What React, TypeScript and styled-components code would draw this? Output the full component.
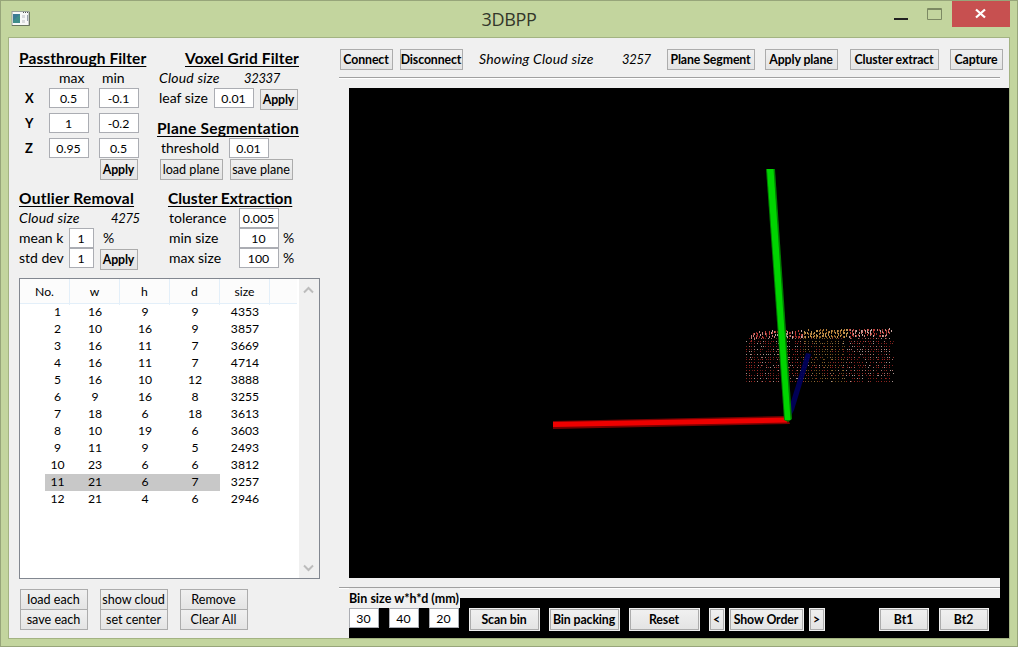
import React from "react";
import styled, { createGlobalStyle } from "styled-components";

const Global = createGlobalStyle`
  * { box-sizing: border-box; }
  html, body { margin: 0; padding: 0; }
  body { font-family: Lato, "Liberation Sans", sans-serif; color: #000; font-size: 14px; overflow: hidden; }
`;

const Frame = styled.div`
  width: 1018px; height: 647px; background: #c3d59e;
  border: 1px solid #97a57a; display: flex; flex-direction: column;
`;
const TitleBar = styled.header`
  height: 36px; display: grid; grid-template-columns: 170px 1fr 170px; flex: none;
`;
const TitleIcon = styled.div`padding: 10px 0 0 10px; line-height: 0;`;
const TitleText = styled.h1`
  margin: 0; text-align: center; font: 400 18px/37px "Open Sans", sans-serif;
  color: #33372a; letter-spacing: -0.3px;
`;
const WindowControls = styled.div`display: flex; justify-content: flex-end; padding-right: 7px;`;
const Client = styled.main`
  width: 1002px; height: 602px; margin-left: 7px; border: 1px solid #a3b382;
  background: #f0f0f0; display: flex; flex: none;
`;
const Side = styled.aside`width: 330px; padding: 10px 0 0 10px; flex: none;`;
const Filters = styled.div`display: flex; height: 230px;`;
const FilterColumn = styled.div<{ $w: number }>`width: ${p => p.$w}px; flex: none;`;
const Section = styled.section<{ $h: number }>`height: ${p => p.$h}px;`;
const Heading = styled.h2<{ $pl?: number; $ls?: number }>`
  margin: 0; padding-left: ${p => p.$pl ?? 0}px; height: 20px; white-space: nowrap;
  font-size: 15.5px; font-weight: 700; line-height: 21px; letter-spacing: ${p => p.$ls ?? 0.1}px;
  text-decoration: underline; text-underline-offset: 2px; text-decoration-thickness: 1px;
  text-decoration-skip-ink: none;
`;
const Row = styled.div<{ $h?: number; $pl?: number }>`
  display: flex; height: ${p => p.$h ?? 20}px; padding-left: ${p => p.$pl ?? 0}px; align-items: flex-start;
`;
const Label = styled.span<{ $w?: number; $bold?: boolean; $italic?: boolean }>`
  width: ${p => (p.$w ? p.$w + "px" : "auto")}; flex: none; white-space: nowrap; line-height: 20px;
  letter-spacing: ${p => (p.$italic ? 0.2 : 0)}px; font-size: ${p => (p.$bold ? 13 : 14)}px;
  font-weight: ${p => (p.$bold ? 700 : 400)}; font-style: ${p => (p.$italic ? "italic" : "normal")};
`;
const Count = styled.span<{ $w?: number }>`
  width: ${p => (p.$w ? p.$w + "px" : "auto")}; flex: none; line-height: 20px;
  font-size: 13px; font-style: italic; letter-spacing: -0.35px;
`;
const Field = styled.input<{ $w?: number; $mr?: number }>`
  width: ${p => p.$w ?? 40}px; height: 20px; margin: 0 ${p => p.$mr ?? 0}px 0 0; padding: 1px 1px 0 0; flex: none;
  border: 1px solid #abadb3; background: #fff; border-radius: 0; text-align: center; color: #000;
  font: 400 12.3px Lato, sans-serif;
`;
const Button = styled.button<{ $w: number; $mt?: number; $mr?: number; $bold?: boolean; $ring?: boolean }>`
  width: ${p => p.$w}px; height: 21px; margin: ${p => p.$mt ?? 0}px ${p => p.$mr ?? 0}px 0 0; padding: 0 1px 1px 0; flex: none;
  border: 1px solid #acacac; border-radius: 0; background: linear-gradient(#f0f0f0, #e4e4e4); color: #000;
  font: ${p => (p.$bold ? "700 12.3px" : "400 12.6px")} Lato, sans-serif; letter-spacing: ${p => (p.$bold ? -0.1 : 0)}px;
  white-space: nowrap; display: flex; align-items: center; justify-content: center;
  box-shadow: ${p => (p.$ring ? "0 0 0 1px #f0f0f0" : "none")};
`;

const ListBox = styled.div`
  width: 301px; height: 301px; border: 1px solid #828790; background: #fff; display: flex;
`;
const Table = styled.div`width: 279px; font-size: 12.2px; flex: none;`;
const HeaderRow = styled.div`
  display: grid; grid-template-columns: 50px 50px 50px 50px 50px 1fr; width: 277px; height: 25px;
  background: #fcfcfc; border-bottom: 1px solid #e3eff9; line-height: 26px; text-align: center;
`;
const HeaderCell = styled.div`border-right: 1px solid #e3eff9; &:last-child { border: 0; }`;
const DataRow = styled.div<{ $selected?: boolean }>`
  display: grid; grid-template-columns: 25px 25px 50px 50px 50px 50px; height: 17px; line-height: 15px; text-align: center;
  background: ${p => (p.$selected ? "linear-gradient(90deg, transparent 25px, #c8c8c8 25px, #c8c8c8 200px, transparent 200px)" : "none")};
  & > :first-child { grid-column: 2; }
`;
const ScrollBar = styled.div`
  width: 20px; background: #f0f0f0; display: flex; flex-direction: column; justify-content: space-between;
  align-items: center; padding: 7px 1px 6px 0;
`;
const Actions = styled.div`display: flex; gap: 12px; padding: 10px 0 0 1px;`;
const ActionStack = styled.div`display: flex; flex-direction: column; & > * + * { margin-top: -1px; }`;

const Work = styled.div`width: 670px; flex: none;`;
const Toolbar = styled.div`display: flex; height: 39px; padding: 11px 0 0 1px;`;
const Rule = styled.hr`
  margin: 0; width: 661px; height: 2px; border: 0; border-top: 1px solid #a0a0a0; border-bottom: 1px solid #fff;
`;
const Viewer = styled.div`background: #000; margin: 9px 0 0 10px; height: 550px;`;
const Scene = styled.svg`display: block;`;
const Divider = styled.div`width: 661px; height: 20px; margin-left: -10px; background: #f0f0f0; padding-top: 9px;`;
const BinPanel = styled.div`display: flex; height: 40px; margin-top: -10px;`;
const BinSize = styled.div`width: 121px; flex: none;`;
const BinLabel = styled.div`
  width: 111px; height: 20px; background: #f0f0f0; font-weight: 700; font-size: 12.5px;
  line-height: 22px; white-space: nowrap;
`;
const BinButtons = styled.div`display: flex; padding-top: 21px;`;

const rows = [
  [1, 16, 9, 9, 4353], [2, 10, 16, 9, 3857], [3, 16, 11, 7, 3669], [4, 16, 11, 7, 4714],
  [5, 16, 10, 12, 3888], [6, 9, 16, 8, 3255], [7, 18, 6, 18, 3613], [8, 10, 19, 6, 3603],
  [9, 11, 9, 5, 2493], [10, 23, 6, 6, 3812], [11, 21, 6, 7, 3257], [12, 21, 4, 6, 2946],
];

function noise(a: number, b: number) {
  const v = Math.sin(a * 127.1 + b * 311.7) * 43758.5453;
  return v - Math.floor(v);
}

type Dot = { x: number; y: number; h: number; c: string };
const faceColors = ["#a02420", "#7c1c1a", "#a8706a", "#8c2822", "#6a1816", "#a89490"];
const midColors = ["#80581f", "#66461c", "#907040", "#8c2822"];
const topColors = ["#c03c36", "#c87c76", "#982826", "#c8a8a2"];
const topMid = ["#b88038", "#986428", "#c09450"];

function buildCloud(): Dot[] {
  const dots: Dot[] = [];
  for (let i = 0; i < 55; i++) {
    for (let j = 0; j < 17; j++) {
      if (noise(i, j) < 0.1 || (i === 54 && noise(i, j) < 0.6)) continue;
      const wobble = noise(i + 31, j) < 0.22 ? 1 : 0;
      const x = Math.round(746 + i * 2.7) + wobble;
      const mid = x > 802 && x < 846;
      const palette = mid && noise(j, i) < 0.85 ? midColors : faceColors;
      dots.push({ x, y: 338 + Math.round(j * 2.67), h: 1, c: palette[Math.floor(noise(i + 7, j) * palette.length)] });
    }
  }
  for (let i = 0; i < 94; i++) {
    const x = Math.round(751 + i * 1.5);
    const palette = x > 802 && x < 848 ? topMid : topColors;
    const lift = Math.max(0, (760 - x) / 3) - (x - 750) / 75;
    for (let j = 0; j < 3; j++) {
      if (noise(i, j + 40) < 0.22) continue;
      dots.push({ x, y: Math.round(330 + lift + j * 2.6 + noise(i, j + 60) * 2), h: 2, c: palette[Math.floor(noise(i, j + 80) * palette.length)] });
    }
  }
  return dots;
}
const cloud = buildCloud();

function PointCloudScene() {
  return (
    <Scene width="660" height="490" viewBox="349 88 660 490">
      <g shapeRendering="crispEdges">
        {cloud.map((d, i) => <rect key={i} x={d.x} y={d.y} width="1" height={d.h} fill={d.c} />)}
      </g>
      <polygon points="806,353 811,354 794,410 788,422 789,408" fill="#00005e" opacity=".9" />
      <polygon points="553,421 787,416 790,424 553,429" fill="#780000" />
      <polygon points="553,422 787,417.500 787,422.500 553,427" fill="#ee0000" />
      <polygon points="766,169 775,169 792,419 788,422 784,420" fill="#007c00" />
      <polygon points="767,169 773.500,169 790.500,420 785,420" fill="#00d400" />
    </Scene>
  );
}

export default function App() {
  return (
    <>
      <Global />
      <Frame>
        <TitleBar>
          <TitleIcon>
            <svg width="20" height="16" viewBox="0 0 20 16">
              <rect x="1" y=".5" width="17" height="14" fill="#f8f8f8" stroke="#98a09a" />
              <path d="M1 14.500h17.500V1" fill="none" stroke="#69755f" />
              <rect x="2" y="3" width="7" height="9" fill="#3f8d8a" />
              <path d="M2 3h7L2 10z" fill="#3b6da0" opacity=".55" />
              <path d="M11 4h3v3h-3zM11 9h3v3h-3z" fill="#d9dadd" />
              <path d="M16.500 4v6" stroke="#9aa4ae" />
              <path d="M12 1.500h1M14 1.500h1M16 1.500h1" stroke="#555" />
            </svg>
          </TitleIcon>
          <TitleText>3DBPP</TitleText>
          <WindowControls>
            <svg width="117" height="26" viewBox="893 1 117 26">
              <rect x="894" y="18" width="14" height="2" fill="#222" />
              <path d="M927.500 8.500h14v11h-14zM927 9.500h15" fill="none" stroke="#7c8963" />
              <rect x="952" y="1" width="58" height="26" fill="#c75050" />
              <path d="M976 9.500l9 8M985 9.500l-9 8" stroke="#fff" strokeWidth="2.300" />
            </svg>
          </WindowControls>
        </TitleBar>
        <Client>
          <Side>
            <Filters>
              <FilterColumn $w={138}>
                <Section $h={140}>
                  <Heading>Passthrough Filter</Heading>
                  <Row $pl={40}><Label $w={43}>max</Label><Label>min</Label></Row>
                  <Row $h={25} $pl={6}><Label $w={24} $bold>X</Label><Field $mr={10} defaultValue="0.5" /><Field defaultValue="-0.1" /></Row>
                  <Row $h={25} $pl={6}><Label $w={24} $bold>Y</Label><Field $mr={10} defaultValue="1" /><Field defaultValue="-0.2" /></Row>
                  <Row $pl={6}><Label $w={24} $bold>Z</Label><Field $mr={10} defaultValue="0.95" /><Field defaultValue="0.5" /></Row>
                  <Row $pl={81}><Button $w={38} $mt={1} $bold>Apply</Button></Row>
                </Section>
                <Section $h={90}>
                  <Heading $ls={0.25}>Outlier Removal</Heading>
                  <Row><Label $w={92} $italic>Cloud size</Label><Count>4275</Count></Row>
                  <Row><Label $w={50}>mean k</Label><Field $w={25} $mr={9} defaultValue="1" /><Label>%</Label></Row>
                  <Row><Label $w={50}>std dev</Label><Field $w={25} $mr={6} defaultValue="1" /><Button $w={38} $mt={1} $bold>Apply</Button></Row>
                </Section>
              </FilterColumn>
              <FilterColumn $w={180}>
                <Section $h={70}>
                  <Heading $pl={28} $ls={0.15}>Voxel Grid Filter</Heading>
                  <Row $pl={2}><Label $w={85} $italic>Cloud size</Label><Count>32337</Count></Row>
                  <Row $pl={2}><Label $w={55}>leaf size</Label><Field $mr={6} defaultValue="0.01" /><Button $w={38} $mt={1} $bold>Apply</Button></Row>
                </Section>
                <Section $h={70}>
                  <Heading $ls={0.23}>Plane Segmentation</Heading>
                  <Row $pl={4}><Label $w={68}>threshold</Label><Field defaultValue="0.01" /></Row>
                  <Row $pl={3}><Button $w={63} $mt={1} $mr={7}>load plane</Button><Button $w={63} $mt={1}>save plane</Button></Row>
                </Section>
                <Section $h={90}>
                  <Heading $pl={11} $ls={0}>Cluster Extraction</Heading>
                  <Row $pl={12}><Label $w={70}>tolerance</Label><Field defaultValue="0.005" /></Row>
                  <Row $pl={12}><Label $w={70}>min size</Label><Field $mr={4} defaultValue="10" /><Label>%</Label></Row>
                  <Row $pl={12}><Label $w={70}>max size</Label><Field $mr={4} defaultValue="100" /><Label>%</Label></Row>
                </Section>
              </FilterColumn>
            </Filters>
            <ListBox>
              <Table>
                <HeaderRow>{["No.", "w", "h", "d", "size", ""].map((h, i) => <HeaderCell key={i}>{h}</HeaderCell>)}</HeaderRow>
                {rows.map(r => (
                  <DataRow key={r[0]} $selected={r[0] === 11}>{r.map((v, i) => <span key={i}>{v}</span>)}</DataRow>
                ))}
              </Table>
              <ScrollBar>
                <svg width="11" height="8" viewBox="0 0 11 8"><path d="M1 6.500L5.500 2L10 6.500" fill="none" stroke="#bcbcbc" strokeWidth="2" /></svg>
                <svg width="11" height="8" viewBox="0 0 11 8"><path d="M1 1.500L5.500 6L10 1.500" fill="none" stroke="#bcbcbc" strokeWidth="2" /></svg>
              </ScrollBar>
            </ListBox>
            <Actions>
              <ActionStack><Button $w={68}>load each</Button><Button $w={68}>save each</Button></ActionStack>
              <ActionStack><Button $w={68}>show cloud</Button><Button $w={68}>set center</Button></ActionStack>
              <ActionStack><Button $w={68}>Remove</Button><Button $w={68}>Clear All</Button></ActionStack>
            </Actions>
          </Side>
          <Work>
            <Toolbar>
              <Button $w={53} $mr={7} $bold>Connect</Button>
              <Button $w={63} $mr={16} $bold>Disconnect</Button>
              <Label $w={143} $italic>Showing Cloud size</Label>
              <Count $w={45}>3257</Count>
              <Button $w={88} $mr={10} $bold>Plane Segment</Button>
              <Button $w={73} $mr={12} $bold>Apply plane</Button>
              <Button $w={89} $mr={11} $bold>Cluster extract</Button>
              <Button $w={53} $bold>Capture</Button>
            </Toolbar>
            <Rule />
            <Viewer>
              <PointCloudScene />
              <Divider><Rule /></Divider>
              <BinPanel>
                <BinSize>
                  <BinLabel>Bin size w*h*d (mm)</BinLabel>
                  <Row><Field $w={30} $mr={10} defaultValue="30" /><Field $w={30} $mr={10} defaultValue="40" /><Field $w={30} defaultValue="20" /></Row>
                </BinSize>
                <BinButtons>
                  <Button $w={69} $mr={11} $bold $ring>Scan bin</Button>
                  <Button $w={69} $mr={11} $bold $ring>Bin packing</Button>
                  <Button $w={69} $mr={11} $bold $ring>Reset</Button>
                  <Button $w={14} $mr={6} $bold $ring>&lt;</Button>
                  <Button $w={73} $mr={7} $bold $ring>Show Order</Button>
                  <Button $w={14} $mr={56} $bold $ring>&gt;</Button>
                  <Button $w={48} $mr={12} $bold $ring>Bt1</Button>
                  <Button $w={48} $bold $ring>Bt2</Button>
                </BinButtons>
              </BinPanel>
            </Viewer>
          </Work>
        </Client>
      </Frame>
    </>
  );
}
